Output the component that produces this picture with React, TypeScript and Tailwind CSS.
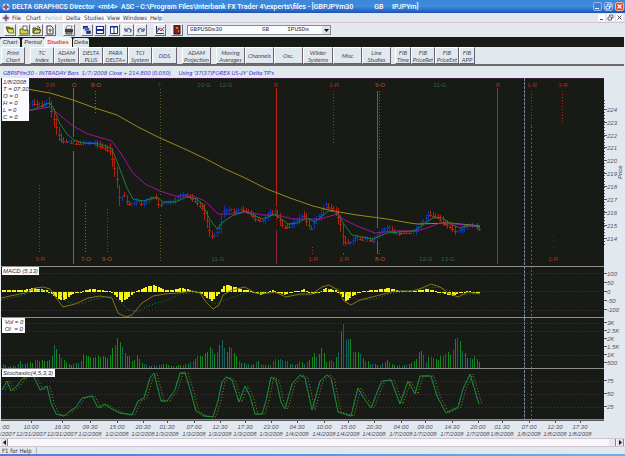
import React from "react";

type Pt = [number, number];

const YELLOW: Pt[] = [[27, 89], [50, 93], [73, 100], [95, 108], [117, 115], [138, 127], [160, 138], [187, 150], [210, 161], [223, 168], [243, 177], [267, 189], [290, 198], [313, 206], [333, 211], [357, 215], [387, 219], [410, 223], [417, 224], [450, 223], [480, 226]];
const MAGENTA: Pt[] = [[27, 111], [50, 107], [62, 117], [73, 126], [88, 134], [112, 141], [120, 152], [133, 173], [145, 184], [160, 191], [175, 196], [193, 196], [203, 200], [210, 206], [218, 214], [233, 214], [248, 212], [263, 215], [277, 215], [293, 219], [320, 219], [337, 214], [343, 219], [357, 226], [375, 233], [393, 231], [417, 231], [427, 228], [440, 223], [455, 224], [480, 227]];
const GREEN: Pt[] = [[27, 111], [37, 108], [49, 103], [53, 107], [60, 124], [67, 134], [74, 140], [83, 143], [100, 144], [112, 149], [118, 164], [127, 188], [133, 199], [143, 201], [157, 197], [163, 202], [175, 202], [187, 197], [197, 199], [203, 205], [209, 218], [217, 229], [223, 222], [232, 216], [245, 211], [255, 216], [263, 219], [275, 214], [288, 224], [297, 223], [307, 218], [315, 222], [328, 211], [337, 212], [343, 223], [352, 235], [373, 239], [387, 233], [410, 231], [415, 231], [425, 223], [435, 217], [442, 218], [453, 225], [460, 228], [472, 225], [480, 227]];
const PRICE: Pt[] = [[27, 109], [33, 102], [38, 104], [44, 105], [49, 102], [52, 112], [55, 122], [58, 133], [62, 140], [70, 142], [80, 143], [95, 143], [104, 147], [110, 150], [114, 165], [117, 178], [119, 195], [121, 200], [124, 194], [128, 203], [133, 205], [138, 201], [143, 204], [150, 199], [156, 197], [159, 205], [165, 203], [173, 202], [182, 195], [188, 195], [195, 200], [203, 208], [207, 220], [210, 232], [213, 237], [217, 232], [221, 226], [223, 212], [231, 210], [235, 212], [244, 209], [250, 213], [256, 218], [264, 221], [270, 213], [276, 212], [280, 220], [284, 227], [292, 225], [298, 220], [304, 215], [311, 228], [316, 220], [321, 215], [326, 205], [332, 208], [337, 213], [341, 225], [344, 240], [350, 243], [356, 238], [365, 239], [375, 240], [381, 232], [389, 228], [396, 233], [405, 232], [414, 232], [420, 226], [430, 214], [438, 217], [445, 223], [453, 228], [456, 232], [462, 230], [470, 225], [476, 226], [480, 229]];

const MACD_HIST: Pt[] = [[2, 2], [24, 2], [32, 4], [45, 2], [49, 0], [52, -3], [62, -9], [72, -2], [78, 0], [91, 3], [107, 1], [111, 0], [121, -10], [131, -3], [135, 1], [145, 5], [152, 7], [165, 2], [171, 2], [182, 4], [192, 1], [198, 0], [211, -9], [219, -1], [222, 6], [228, 7], [240, 3], [250, 1], [254, -1], [260, -3], [266, 0], [273, 2], [278, -1], [284, -3], [290, 0], [297, 1], [303, 3], [308, 0], [312, -2], [318, 0], [325, 4], [334, 2], [338, 0], [345, -9], [357, -1], [361, 1], [375, 2], [388, 4], [400, 1], [414, 1], [426, 3], [435, 1], [440, -1], [451, -4], [460, -1], [468, 1], [474, -1], [480, -1]];
const MACD_FAST: Pt[] = [[1, 298], [10, 296], [25, 293], [35, 288], [43, 287], [50, 289], [57, 299], [63, 307], [75, 304], [88, 298], [100, 296], [112, 298], [118, 313], [126, 317], [132, 315], [142, 303], [153, 296], [165, 294], [178, 293], [192, 291], [200, 293], [206, 302], [213, 309], [219, 305], [223, 295], [232, 290], [245, 287], [255, 293], [262, 294], [275, 292], [286, 297], [300, 294], [312, 294], [322, 287], [329, 285], [338, 290], [344, 301], [351, 305], [360, 300], [380, 295], [395, 291], [412, 291], [422, 288], [431, 284], [440, 287], [448, 293], [458, 297], [468, 292], [480, 294]];
const MACD_SLOW: Pt[] = [[1, 300], [20, 296], [35, 291], [50, 290], [58, 293], [67, 302], [80, 304], [95, 299], [112, 296], [120, 302], [127, 309], [137, 312], [150, 305], [165, 301], [180, 294], [200, 292], [208, 299], [215, 304], [228, 299], [245, 293], [265, 292], [290, 295], [310, 295], [325, 290], [338, 288], [350, 296], [358, 300], [375, 299], [392, 293], [412, 291], [428, 288], [440, 287], [450, 291], [465, 295], [480, 293]];

const VOLUME: Pt[] = [[3, 6], [7, 2], [17, 3], [20, 9], [23, 4], [30, 6], [36, 9], [48, 8], [52, 13], [54, 27], [57, 20], [60, 16], [65, 8], [70, 4], [80, 6], [83, 17], [88, 14], [92, 10], [97, 14], [102, 12], [110, 14], [115, 30], [118, 37], [121, 33], [124, 20], [130, 12], [133, 6], [136, 15], [142, 6], [150, 2], [162, 5], [167, 5], [172, 2], [180, 4], [190, 6], [195, 12], [200, 15], [206, 20], [210, 27], [215, 16], [220, 25], [223, 33], [226, 18], [230, 24], [235, 14], [240, 8], [245, 5], [250, 3], [257, 8], [262, 3], [270, 3], [275, 12], [283, 10], [290, 5], [296, 3], [301, 9], [306, 5], [313, 16], [316, 13], [322, 22], [326, 8], [334, 8], [338, 16], [340, 20], [341, 58], [343, 58], [344, 30], [350, 32], [354, 18], [358, 17], [365, 8], [373, 5], [380, 3], [387, 10], [392, 4], [400, 3], [405, 3], [413, 6], [418, 18], [422, 18], [426, 7], [430, 16], [436, 8], [442, 14], [450, 18], [454, 28], [459, 35], [463, 20], [468, 12], [475, 12], [480, 7]];

const STOCH: Pt[] = [[2, 390], [7, 381], [11, 391], [17, 386], [22, 379], [28, 376], [34, 377], [40, 390], [47, 386], [51, 403], [56, 414], [64, 416], [70, 411], [76, 407], [82, 398], [92, 396], [98, 408], [104, 404], [112, 409], [120, 413], [132, 415], [138, 401], [144, 398], [150, 378], [154, 373], [161, 401], [167, 401], [175, 390], [180, 373], [185, 373], [190, 389], [196, 411], [204, 416], [213, 417], [218, 401], [222, 382], [226, 377], [232, 380], [239, 402], [245, 386], [250, 396], [255, 414], [262, 414], [266, 401], [271, 377], [276, 380], [281, 402], [285, 409], [292, 384], [300, 375], [305, 378], [312, 410], [320, 381], [327, 375], [331, 378], [338, 412], [351, 416], [358, 388], [363, 397], [371, 408], [378, 390], [382, 381], [391, 380], [400, 404], [408, 381], [415, 394], [420, 376], [431, 376], [437, 396], [446, 413], [458, 407], [463, 389], [470, 374], [479, 404]];

const line = (p: Pt[], dx = 0) => p.map(([x, y]) => `${x + dx},${y}`).join(" ");

function valueAt(p: Pt[], x: number) {
  for (let i = 1; i < p.length; i++) {
    if (x <= p[i][0]) {
      const [x0, y0] = p[i - 1];
      const [x1, y1] = p[i];
      return y0 + ((y1 - y0) * (x - x0)) / (x1 - x0);
    }
  }
  return p[p.length - 1][1];
}

const noise = (i: number) => {
  const s = Math.sin(i * 12.9898) * 43758.5453;
  return s - Math.floor(s);
};

const priceBars = Array.from({ length: 187 }, (_, i) => {
  const x = 27 + i * 2.43;
  const y = valueAt(PRICE, x);
  const dy = valueAt(PRICE, x + 2) - valueAt(PRICE, x - 2);
  const down = Math.abs(dy) > 1.2 ? dy > 0 : noise(i) > 0.5;
  const half = 1 + Math.min(8, Math.abs(dy) * 0.5) + noise(i + 7) * 2;
  return { x: Math.round(x) + 0.5, top: Math.round(y - half), bottom: Math.round(y + half), mid: Math.round(y + (down ? 1 : -1)), down };
});

const macdBars = Array.from({ length: 197 }, (_, i) => {
  const x = 2 + i * 2.43;
  return { x: Math.round(x), h: valueAt(MACD_HIST, x) };
});

const volumeBars = Array.from({ length: 197 }, (_, i) => {
  const x = 3 + i * 2.43;
  return { x: Math.round(x), h: Math.min(50, Math.round(valueAt(VOLUME, x) * (0.7 + noise(i) * 0.3))), teal: noise(i + 31) > 0.6 };
});

type Mark = { x: number; label: string; at: "top" | "bottom"; color: string };
const R = "#c0240e";
const O = "#c0501a";
const G = "#1f6a56";
const V = "#4b2a5a";
const MARKS: Mark[] = [
  { x: 50, label: "3-R", at: "top", color: R },
  { x: 74, label: "O", at: "top", color: O },
  { x: 96, label: "8-O", at: "top", color: O },
  { x: 160, label: "7-", at: "top", color: "#48502c" },
  { x: 204, label: "10-G", at: "top", color: G },
  { x: 226, label: "12-G", at: "top", color: G },
  { x: 276, label: "R", at: "top", color: R },
  { x: 334, label: "2-R", at: "top", color: R },
  { x: 380, label: "9-O", at: "top", color: O },
  { x: 440, label: "11-G", at: "top", color: G },
  { x: 498, label: "R", at: "top", color: R },
  { x: 532, label: "1-R", at: "top", color: R },
  { x: 563, label: "3-R", at: "top", color: R },
  { x: 40, label: "3-R", at: "bottom", color: R },
  { x: 86, label: "7-O", at: "bottom", color: O },
  { x: 107, label: "9-O", at: "bottom", color: O },
  { x: 218, label: "11-G", at: "bottom", color: G },
  { x: 313, label: "1-R", at: "bottom", color: R },
  { x: 344, label: "2-R", at: "bottom", color: R },
  { x: 380, label: "8-O", at: "bottom", color: O },
  { x: 426, label: "12-G", at: "bottom", color: G },
  { x: 448, label: "13-G", at: "bottom", color: G },
  { x: 553, label: "2-R", at: "bottom", color: R },
];

type Rule = { x: number; y1: number; y2: number; color: string; dash?: string };
const RULES: Rule[] = [
  { x: 73.5, y1: 88, y2: 137, color: "#b0560f" },
  { x: 73.5, y1: 151, y2: 264, color: "#b0560f" },
  { x: 276.5, y1: 88, y2: 206, color: "#b8240f" },
  { x: 276.5, y1: 206, y2: 225, color: "#7a2018", dash: "1 1" },
  { x: 276.5, y1: 230, y2: 264, color: "#8a2440" },
  { x: 377.5, y1: 91, y2: 228, color: "#8a5040" },
  { x: 377.5, y1: 241, y2: 254, color: "#8a5040" },
  { x: 497.5, y1: 88, y2: 264, color: "#b8240f" },
  { x: 49.5, y1: 90, y2: 93, color: R, dash: "1 2" },
  { x: 95.5, y1: 91, y2: 113, color: O, dash: "1 2" },
  { x: 160.5, y1: 89, y2: 196, color: "#5a6420", dash: "1 2" },
  { x: 160.5, y1: 215, y2: 262, color: "#5a6420", dash: "1 2" },
  { x: 39.5, y1: 185, y2: 254, color: R, dash: "1 2" },
  { x: 85.5, y1: 203, y2: 254, color: O, dash: "1 2" },
  { x: 107.5, y1: 209, y2: 254, color: "#6a3a78", dash: "1 2" },
  { x: 333.5, y1: 91, y2: 145, color: R, dash: "1 2" },
  { x: 379.5, y1: 91, y2: 159, color: "#8a4a68", dash: "1 2" },
  { x: 379.5, y1: 250, y2: 254, color: "#8a4a68", dash: "1 2" },
  { x: 312.5, y1: 247, y2: 254, color: R, dash: "1 2" },
  { x: 343.5, y1: 253, y2: 255, color: R },
  { x: 562.5, y1: 91, y2: 124, color: R, dash: "1 2" },
  { x: 553.5, y1: 235, y2: 251, color: V, dash: "1 5" },
  { x: 531.5, y1: 91, y2: 125, color: R, dash: "1 2" },
  { x: 531.5, y1: 126, y2: 419, color: "#5c5c68", dash: "2 2" },
];

const PANES = [
  { grid: [274, 292, 311], labels: [[274, "100"], [283, "50"], [292, "0"], [301, "-50"], [310, "-100"]] },
  { grid: [324, 332, 356], labels: [[323, "3K"], [331, "2.5K"], [339, "2K"], [347, "1.5K"], [355, "1K"], [363, "500"]] },
  { grid: [382, 395, 408], labels: [[381, "75"], [394, "50"], [407, "25"]] },
] as { grid: number[]; labels: [number, string][] }[];

const PRICES: [number, string][] = [[110, "224"], [123, "223"], [136, "222"], [148, "221"], [161, "220"], [174, "219"], [187, "218"], [200, "217"], [213, "216"], [226, "215"], [239, "214"]];

const TIMES: [number, string, string][] = [
  [31, "10:00", "12/31/2007"], [62, "16:30", "12/31/2007"], [90, "09:30", "1/2/2008"],
  [117, "15:00", "1/2/2008"], [143, "20:30", "1/2/2008"], [167, "01:30", "1/3/2008"], [194, "07:00", "1/3/2008"],
  [220, "12:30", "1/3/2008"], [245, "17:30", "1/3/2008"], [271, "23:00", "1/3/2008"], [297, "04:30", "1/4/2008"],
  [324, "10:00", "1/4/2008"], [348, "15:00", "1/4/2008"], [374, "20:30", "1/4/2008"], [401, "04:00", "1/7/2008"],
  [425, "09:00", "1/7/2008"], [452, "14:30", "1/7/2008"], [478, "20:00", "1/7/2008"], [502, "01:30", "1/8/2008"],
  [529, "07:00", "1/8/2008"], [555, "12:30", "1/8/2008"], [580, "17:30", "1/8/2008"],
];

const SANS = "font-['Liberation_Sans',sans-serif]";

function Caption({ x, y, w, h, lines, first }: { x: number; y: number; w: number; h: number; lines: string[]; first: number }) {
  return (
    <g>
      <rect x={x} y={y} width={w} height={h} fill="#fbfbfd" />
      {lines.map((t, i) => (
        <text key={i} x={x + 1} y={first + i * 7} fill="#33333d" className="whitespace-pre">{t}</text>
      ))}
    </g>
  );
}

function Charts() {
  return (
    <svg viewBox="0 78 625 360" className={`block w-full text-[6px] italic ${SANS}`} role="img" aria-label="GBPJPY price, MACD, volume and stochastic charts">
      <rect x="1" y="78" width="603" height="342" fill="#181a15" />
      <g shapeRendering="crispEdges">
        {PANES.flatMap((p) => p.grid).map((y) => (
          <line key={y} x1="2" x2="604" y1={y - 0.5} y2={y - 0.5} stroke="#4a2c4c" strokeDasharray="1 2" />
        ))}
        <line x1="2" x2="604" y1="78.5" y2="78.5" stroke="#4a2c4c" strokeDasharray="1 1" />
        {RULES.map((r, i) => (
          <line key={i} x1={r.x} x2={r.x} y1={r.y1} y2={r.y2} stroke={r.color} strokeDasharray={r.dash} />
        ))}
        {priceBars.map((b) => (
          <path key={b.x} d={`M${b.x} ${b.top}V${b.bottom}M${b.x - 1.5} ${b.mid + 0.5}h3`} stroke={b.down ? "#b0210f" : "#0c37a4"} />
        ))}
        {macdBars.map((b) => (
          <rect key={b.x} x={b.x} y={b.h > 0 ? 292 - b.h : 292} width="2" height={Math.max(1, Math.abs(b.h))} fill="#f6f410" />
        ))}
        {volumeBars.map((b) => (
          <rect key={b.x} x={b.x} y={368 - b.h} width="1" height={b.h} fill={b.teal ? "#17605f" : "#108a18"} />
        ))}
      </g>
      <g fill="none">
        <polyline points={line(YELLOW)} stroke="#9c8a16" />
        <polyline points={line(MAGENTA)} stroke="#9a159c" />
        <polyline points={line(GREEN)} stroke="#148440" />
        <polyline points={line(MACD_FAST)} stroke="#8a7414" />
        <polyline points={line(MACD_SLOW)} stroke="#1b8060" strokeDasharray="1 2" />
        <polyline points={line(STOCH, 3)} stroke="#94801a" strokeDasharray="1 2" />
        <polyline points={line(STOCH)} stroke="#0f9a22" />
        <polyline points={line(STOCH)} stroke="#1c6c74" strokeDasharray="6 7" />
      </g>
      <g shapeRendering="crispEdges" stroke="#8e8e8c">
        <line x1="1" x2="604" y1="266.5" y2="266.5" />
        <line x1="1" x2="604" y1="317.5" y2="317.5" />
        <line x1="1" x2="604" y1="368.5" y2="368.5" />
        <line x1="1" x2="604" y1="419.5" y2="419.5" />
        <line x1="524.5" x2="524.5" y1="78" y2="419" stroke="#8088a8" strokeDasharray="3 1" />
      </g>
      {MARKS.map((m) => (
        <text key={m.label + m.x + m.at} x={m.x} y={m.at === "top" ? 87 : 261} textAnchor="middle" fill={m.color} className="not-italic">{m.label}</text>
      ))}

      <Caption x={2} y={78} w={27} h={43} first={84} lines={["1/8/2008", "T = 07:30", "O = 0", "H = 0", "L = 0", "C = 0"]} />
      <Caption x={2} y={267} w={37} h={8} first={273} lines={["MACD (5,13)"]} />
      <Caption x={2} y={318} w={23} h={15} first={324} lines={[" Vol = 0", " OI  = 0"]} />
      <Caption x={2} y={369} w={53} h={8} first={375} lines={["Stochastic(4,5,3,3)"]} />

      <g shapeRendering="crispEdges" stroke="#55555f">
        {[...PRICES, ...PANES.flatMap((p) => p.labels)].map(([y]) => (
          <line key={y} x1="604" x2="607" y1={y - 0.5} y2={y - 0.5} />
        ))}
        <line x1="604.5" x2="604.5" y1="100" y2="245" strokeDasharray="1 2" />
        <line x1="1" x2="604" y1="420.5" y2="420.5" />
        {TIMES.map(([x]) => (
          <line key={x} x1={x + 0.5} x2={x + 0.5} y1="421" y2="423" />
        ))}
      </g>
      <g fill="#54505e">
        {[...PRICES, ...PANES.flatMap((p) => p.labels)].map(([y, t]) => (
          <text key={y} x="607" y={y + 2}>{t}</text>
        ))}
        <text transform="translate(622 179) rotate(-90)" fill="#33333d">Price</text>
        <text x="1" y="429">:00</text>
        <text x="0" y="436">/2007</text>
        {TIMES.map(([x, t, d]) => (
          <g key={x} textAnchor="middle">
            <text x={x} y="429">{t}</text>
            <text x={x} y="436">{d}</text>
          </g>
        ))}
      </g>
    </svg>
  );
}

function ToolButton({ label, className = "", children }: { label: string; className?: string; children: React.ReactNode }) {
  return (
    <button aria-label={label} className={`flex h-3 w-3 shrink-0 items-center justify-center border border-t-white border-l-white border-r-[#6f6a78] border-b-[#6f6a78] bg-[#e6ebee] ${className}`}>
      <svg viewBox="0 0 10 10" className="size-[10px] shrink-0">{children}</svg>
    </button>
  );
}

const TOOLS: { label: string; gap?: string; icon: React.ReactNode }[] = [
  { label: "Open chart", icon: <><path d="M1 2h3l1 1h3v4H3z" fill="#8c8a10" stroke="#33330c" strokeWidth=".7" /><path d="M2 4h6l1 4H4z" fill="#e8e640" stroke="#33330c" strokeWidth=".6" /></> },
  { label: "Open recent", gap: "ml-[2px]", icon: <><path d="M1 4h3l1 1h4v4H1z" fill="#d8d428" stroke="#33330c" strokeWidth=".7" /><path d="M4 1h4v4H4z" fill="#fff" stroke="#333" strokeWidth=".7" /></> },
  { label: "Open folder", gap: "ml-px", icon: <><path d="M1 3h3l1 1h3v4H1z" fill="#a8a414" stroke="#22220a" strokeWidth=".8" /><path d="M1 8l2-3h6L7 8z" fill="#ecea50" stroke="#22220a" strokeWidth=".6" /><path d="M5 2q2-1 3 1" fill="none" stroke="#111" strokeWidth=".8" /></> },
  { label: "Preview", gap: "ml-px", icon: <><path d="M2 1h4l2 2v6H2z" fill="#fff" stroke="#333" /><path d="M4 4h2v2H4zM5 6v2" fill="none" stroke="#444" strokeWidth=".8" /></> },
  { label: "Print", gap: "ml-[7px]", icon: <><path d="M3 1h5l-1 3H2z" fill="#fff" stroke="#444" strokeWidth=".6" /><path d="M1 4h8v3H1z" fill="#44444a" /><path d="M2 7h6v2H2z" fill="#aaa" stroke="#222" strokeWidth=".7" /></> },
  { label: "Cascade windows", gap: "ml-[6px]", icon: <><path d="M1 1h5v3H1z" fill="#1c2c88" /><path d="M2.500 3h5v3h-5z" fill="#3b4fb0" stroke="#e6ebee" strokeWidth=".4" /><path d="M4 5.500h5V9H4z" fill="#1c2c88" stroke="#e6ebee" strokeWidth=".4" /></> },
  { label: "Tile horizontally", gap: "ml-px", icon: <path d="M1.500 1.500h7v3h-7zM1.500 5.500h7v3h-7z" fill="#fff" stroke="#1c2c88" strokeWidth="1.200" /> },
  { label: "Tile vertically", gap: "ml-[2px]", icon: <path d="M1.500 1.500h7v7h-7zM5 1v8M1 2h8" fill="#fff" stroke="#1c2c88" strokeWidth="1" /> },
  { label: "Undo", gap: "ml-[2px]", icon: <path d="M2 3v3h3M2.500 5.500Q5 2 8 4.500Q8.500 6 7 7.500" fill="none" stroke="#35357c" /> },
  { label: "Redo", gap: "ml-px", icon: <path d="M8 3v3H5M7.500 5.500Q5 2 2 4.500Q1.500 6 3 7.500" fill="none" stroke="#35357c" /> },
  { label: "Chart settings", gap: "ml-[7px]", icon: <><path d="M1.500 1v7.500H9" fill="none" stroke="#335" /><path d="M2 7l2-3 2 2 3-4" fill="none" stroke="#c43030" /><path d="M2 4l3-1 4 3" fill="none" stroke="#3048b0" strokeWidth=".8" /></> },
  { label: "Exit", gap: "ml-[5px]", icon: <><path d="M2 0h6v9H2z" fill="#8e1c1c" stroke="#2a1010" /><path d="M4 2h2v2H4z" fill="#e07030" /><path d="M6 6h1" stroke="#ffe070" /></> },
];

const MENUS: { t: string; w: string }[] = [
  { t: "File", w: "w-[14px]" }, { t: "Chart", w: "w-[19px]" }, { t: "Period", w: "w-[21px]" }, { t: "Delta", w: "w-[18px]" },
  { t: "Studies", w: "w-[23px]" }, { t: "View", w: "w-[16px]" }, { t: "Windows", w: "w-[27px]" }, { t: "Help", w: "w-[13px]" },
];

const STUDIES: { t: string[]; c: string }[] = [
  { t: ["Print", "Chart"], c: "w-6 mr-[5px]" },
  { t: ["TC", "Index"], c: "w-6" },
  { t: ["ADAM", "System"], c: "w-[25px]" },
  { t: ["DELTA", "PLUS"], c: "w-6" },
  { t: ["PARA", "DELTA+"], c: "w-[25px]" },
  { t: ["TCI", "System"], c: "w-6" },
  { t: ["DDS"], c: "w-[25px] mr-[5px]" },
  { t: ["ADAM", "Projection"], c: "w-[29px] mr-[5px]" },
  { t: ["Moving", "Averages"], c: "w-[29px]" },
  { t: ["Channels"], c: "w-[29px]" },
  { t: ["Osc."], c: "w-[29px]" },
  { t: ["Wilder", "Systems"], c: "w-[30px]" },
  { t: ["Misc"], c: "w-[29px]" },
  { t: ["Line", "Studies"], c: "w-[29px] mr-1" },
  { t: ["FIB", "Time"], c: "w-4" },
  { t: ["FIB", "PriceRet"], c: "w-6" },
  { t: ["FIB", "PriceExt"], c: "w-6" },
  { t: ["FIB", "APP"], c: "w-4" },
];

function Logo() {
  return (
    <svg viewBox="0 0 10 10" className="size-2 shrink-0">
      <circle cx="5" cy="5" r="4.500" fill="#d8e0f4" />
      <path d="M5 0l1.500 3.500L10 5 6.500 6.500 5 10 3.500 6.500 0 5l3.500-1.500z" fill="#5068c0" />
      <circle cx="5" cy="5" r="1.800" fill="#d83a2c" />
    </svg>
  );
}

const nb = (n: number) => "\u00a0".repeat(n);

export default function App() {
  return (
    <div className={`w-full overflow-hidden bg-[#e1e9ee] text-[6px] leading-[7px] text-[#33333d] ${SANS}`}>
      <header className="flex h-[13px] items-center bg-linear-to-b from-[#3f87d8] via-[#3c8ce0] to-[#2350b4] pl-[2px] pr-px text-white">
        <Logo />
        <h1 className="ml-[2px] flex-1 whitespace-pre font-['Roboto',sans-serif] text-[7px] font-medium leading-[12px]">
          {"DELTA GRAPHICS Director  <mt4>  ASC - C:\\Program Files\\Interbank FX Trader 4\\experts\\files - [GBPJPYm30            GB     IPJPYm]"}
        </h1>
        <div className="flex gap-[2px]">
          <button aria-label="Minimize" className="flex size-[9px] items-end justify-start rounded-xs border border-[#8fb8ec] bg-[#3f7fd8] p-px"><span className="h-px w-1 bg-white" /></button>
          <button aria-label="Restore" className="flex size-[9px] items-center justify-center rounded-xs border border-[#8fb8ec] bg-[#3f7fd8]">
            <svg viewBox="0 0 7 7" className="size-[7px]"><path d="M2.500 2V1h3.500v3H5M1 3h3.500v3H1z" fill="none" stroke="#fff" strokeWidth=".9" /></svg>
          </button>
          <button aria-label="Close" className="flex size-[9px] items-center justify-center rounded-xs border border-[#f0b8a0] bg-[#d8492a]">
            <svg viewBox="0 0 7 7" className="size-[7px]"><path d="M1.500 1.500l4 4M5.500 1.500l-4 4" stroke="#fff" strokeWidth="1.200" /></svg>
          </button>
        </div>
      </header>

      <nav className="flex h-[10px] items-center justify-between border-b border-[#d2c4d2] pr-[2px]">
        <div className="flex h-full w-[163px] items-center bg-[#f8f9fb] pl-[2px]">
          <Logo />
          <div className="ml-[2px] flex font-['DejaVu_Sans_Condensed','DejaVu_Sans',sans-serif]">
            {MENUS.map((m) => (
              <button key={m.t} className={`text-left ${m.w} ${m.t === "Period" ? "text-[#b4b8c0]" : ""}`}>{m.t}</button>
            ))}
          </div>
        </div>
        <div className="flex gap-[2px] text-[#55505c]">
          <button aria-label="Minimize chart" className="flex size-[7px] items-end justify-center bg-white pb-px"><span className="h-px w-[3px] bg-current" /></button>
          <button aria-label="Restore chart" className="size-[7px] bg-white"><svg viewBox="0 0 7 7"><path d="M2.500 2V1h3.500v3H5M1 3h3.500v3H1z" fill="none" stroke="currentColor" strokeWidth=".9" /></svg></button>
          <button aria-label="Close chart" className="size-[7px] bg-white"><svg viewBox="0 0 7 7"><path d="M1.500 1.500l4 4M5.500 1.500l-4 4" stroke="currentColor" /></svg></button>
        </div>
      </nav>

      <div className="flex h-[14px] items-center pl-1">
        {TOOLS.map((t) => (
          <ToolButton key={t.label} label={t.label} className={t.gap}>{t.icon}</ToolButton>
        ))}
        <div className="relative ml-1 w-[144px]">
          <select aria-label="Symbol" className="block h-[10px] w-full appearance-none border border-[#8a8a96] bg-[#fbfcfd] pl-[2px] font-['Liberation_Mono',monospace] text-[6px] leading-[8px] text-[#33333d]">
            <option>{"GBPUSDm30" + nb(11) + "GB" + nb(5) + "IPUSDm"}</option>
          </select>
          <span className="pointer-events-none absolute right-px top-px flex h-2 w-2 items-center justify-center bg-[#dfe3e8]">
            <svg viewBox="0 0 5 3" className="h-[3px] w-[5px]"><path d="M0 0h5L2.500 3z" fill="#111" /></svg>
          </span>
        </div>
      </div>

      <div className="mr-px flex h-[10px] items-end bg-[#181a15] italic">
        <button className="h-[9px] w-5 rounded-t-xs bg-[#e1e9ee]">Chart</button>
        <button className="ml-[2px] h-[9px] w-[22px] rounded-t-xs bg-[#e1e9ee]">Period</button>
        <button className="h-[10px] w-[28px] rounded-t-xs bg-[#f2f5f7] font-bold not-italic text-[#f0401c]">Studies</button>
        <button className="ml-px h-[9px] w-4 rounded-t-xs bg-[#e1e9ee]">Delta</button>
      </div>

      <div className="mr-px flex h-[19px] border-b-2 border-[#6f686e] pl-px">
        {STUDIES.map((s) => (
          <button key={s.t.join(" ")} className={`flex h-[17px] shrink-0 flex-col items-center justify-center border border-t-white border-l-white border-r-[#6a6070] border-b-[#6a6070] font-['Lato',sans-serif] italic text-[#4a4652] ${s.c}`}>
            {s.t.map((l) => <span key={l}>{l}</span>)}
          </button>
        ))}
      </div>

      <p className="flex h-3 items-center gap-2 pl-[3px] font-['Lato',sans-serif] italic text-[#4a35d8]">
        <span>GBPJPYm30 - INTRADAY Bars&nbsp; 1/7/2008 Close + 214.800 (0.050)</span>
        <span>Using '37(37)FOREX US-JY' Delta TP's</span>
      </p>

      <main>
        <Charts />
      </main>

      <div className="flex h-[9px] items-center justify-between border-y border-[#d2c4d2] bg-[#f5f7f9] px-px">
        <button aria-label="Scroll left" className="flex h-[7px] w-[7px] items-center justify-center border-r border-[#8a8490] bg-[#dfe3e8]">
          <svg viewBox="0 0 3 5" className="h-[5px] w-[3px]"><path d="M3 0v5L0 2.500z" fill="#111" /></svg>
        </button>
        <div className="flex gap-px">
          <button aria-label="Scroll thumb" className="h-[7px] w-[7px] border-r border-[#8a8490] bg-[#e6eaee]" />
          <button aria-label="Scroll right" className="flex h-[7px] w-[7px] items-center justify-center border-r border-[#8a8490] bg-[#dfe3e8]">
            <svg viewBox="0 0 3 5" className="h-[5px] w-[3px]"><path d="M0 0v5l3-2.500z" fill="#111" /></svg>
          </button>
        </div>
      </div>
      <footer className="flex h-[7px] items-center pl-[2px]">
        <span className="w-[35px] border-r border-[#b4b0bc] font-['DejaVu_Sans_Condensed','DejaVu_Sans',sans-serif]">F1 for Help</span>
      </footer>
      <div className="h-[2px] bg-linear-to-r from-[#5a78d4] to-[#6ab0ec]" />
    </div>
  );
}
